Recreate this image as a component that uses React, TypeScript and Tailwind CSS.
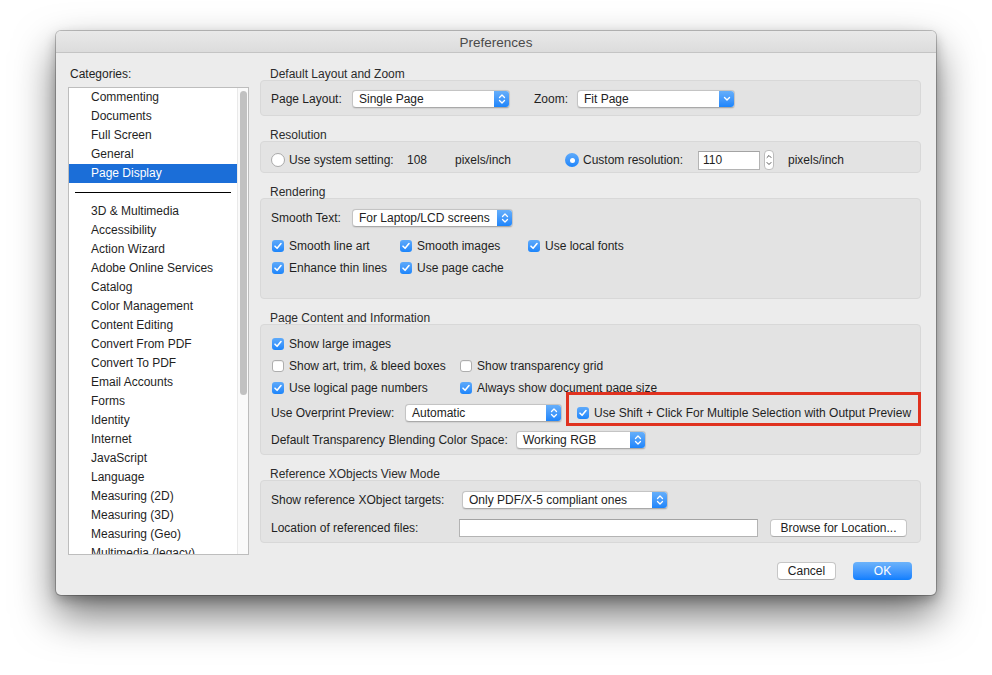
import type { ReactNode } from 'react'

const categoriesTop = ['Commenting', 'Documents', 'Full Screen', 'General', 'Page Display']
const categoriesRest = [
  '3D & Multimedia',
  'Accessibility',
  'Action Wizard',
  'Adobe Online Services',
  'Catalog',
  'Color Management',
  'Content Editing',
  'Convert From PDF',
  'Convert To PDF',
  'Email Accounts',
  'Forms',
  'Identity',
  'Internet',
  'JavaScript',
  'Language',
  'Measuring (2D)',
  'Measuring (3D)',
  'Measuring (Geo)',
  'Multimedia (legacy)',
]

function UpDown() {
  return (
    <svg width="16" height="18" viewBox="0 0 16 18" fill="none" stroke="white" strokeWidth="1.3" strokeLinecap="round" strokeLinejoin="round">
      <path d="M5.5 7.5 L8 5 L10.5 7.5" />
      <path d="M5.5 10.5 L8 13 L10.5 10.5" />
    </svg>
  )
}

function Down() {
  return (
    <svg width="16" height="18" viewBox="0 0 16 18" fill="none" stroke="white" strokeWidth="1.4" strokeLinecap="round" strokeLinejoin="round">
      <path d="M5.5 7.5 L8 10 L10.5 7.5" />
    </svg>
  )
}

function Select({ value, width, pulldown }: { value: string; width: string; pulldown?: boolean }) {
  return (
    <div className={`${width} h-[18px] flex rounded-[4px] bg-white border border-[#c4c4c4] border-b-[#a9a9a9] shadow-[0_0.5px_1px_rgba(0,0,0,0.08)] overflow-hidden`}>
      <span className="flex-1 pl-[6px] leading-[16px] text-[12px] text-[#222]">{value}</span>
      <span className="w-[16px] -my-px -mr-px flex items-center justify-center rounded-r-[4px] bg-gradient-to-b from-[#69b1fa] to-[#1482fb]">
        {pulldown ? <Down /> : <UpDown />}
      </span>
    </div>
  )
}

function Check({ on }: { on?: boolean }) {
  if (!on)
    return <span className="w-[12px] h-[12px] shrink-0 rounded-[3px] bg-white border border-[#aeaeae] shadow-[inset_0_1px_0_rgba(0,0,0,0.05)]" />
  return (
    <span className="w-[12px] h-[12px] shrink-0 rounded-[3px] bg-gradient-to-b from-[#5eaafa] to-[#1a85fb] flex items-center justify-center">
      <svg width="10" height="10" viewBox="0 0 10 10" fill="none" stroke="white" strokeWidth="1.6" strokeLinecap="round" strokeLinejoin="round">
        <path d="M2 5.2 L4.1 7.3 L8 2.6" />
      </svg>
    </span>
  )
}

function Radio({ on }: { on?: boolean }) {
  if (!on) return <span className="w-[14px] h-[14px] shrink-0 rounded-full bg-white border border-[#a9a9a9]" />
  return (
    <span className="w-[14px] h-[14px] shrink-0 rounded-full bg-gradient-to-b from-[#5eaafa] to-[#1a85fb] flex items-center justify-center">
      <span className="w-[5px] h-[5px] rounded-full bg-white" />
    </span>
  )
}

function CheckItem({ label, on, width }: { label: string; on?: boolean; width?: string }) {
  return (
    <div className={`flex items-center gap-[5px] ${width ?? ''}`}>
      <Check on={on} />
      <span>{label}</span>
    </div>
  )
}

function Section({ title, box, children }: { title: string; box: string; children: ReactNode }) {
  return (
    <div>
      <div className="h-[16px] leading-[20px] pl-[10px] text-[#2b2b2b]">{title}</div>
      <div className={`${box} rounded-[4px] bg-[#e3e3e3] border border-[#d8d8d8] pl-[10px]`}>{children}</div>
    </div>
  )
}

export default function App() {
  return (
    <div className="w-[992px] h-[675px] bg-white pt-[31px] pl-[56px] font-['Liberation_Sans',Arial,sans-serif] text-[12px] text-[#1f1f1f]">
      <div className="w-[880px] h-[564px] rounded-[5px] bg-[#ececec] overflow-hidden shadow-[0_20px_42px_rgba(0,0,0,0.55),0_5px_12px_rgba(0,0,0,0.25),0_0_0_1px_rgba(0,0,0,0.22)]">
        {/* title bar */}
        <div className="h-[22px] pt-[4px] bg-gradient-to-b from-[#e9e9e9] to-[#dcdcdc] border-b border-[#c4c4c4] flex items-center justify-center text-[13.5px] text-[#4a4a4a]">
          Preferences
        </div>

        <div className="flex pl-[12px]">
          {/* categories */}
          <div className="w-[181px] pt-[12px]">
            <div className="h-[16px] leading-[18px] pl-[2px]">Categories:</div>
            <div className="mt-[6px] h-[468px] border border-[#bdbdbd] bg-white flex overflow-hidden">
              <div className="flex-1">
                {categoriesTop.map((c) => (
                  <div
                    key={c}
                    className={`h-[19px] leading-[18px] pl-[22px] ${c === 'Page Display' ? 'bg-[#1b6ed8] text-white' : ''}`}
                  >
                    {c}
                  </div>
                ))}
                <div className="h-[19px] flex items-center px-[6px]">
                  <div className="h-px w-full bg-black" />
                </div>
                {categoriesRest.map((c) => (
                  <div key={c} className="h-[19px] leading-[18px] pl-[22px]">
                    {c}
                  </div>
                ))}
              </div>
              <div className="w-[11px] bg-[#fafafa] border-l border-[#e9e9e9] pt-[3px] flex justify-center">
                <div className="w-[7px] h-[304px] rounded-full bg-[#c1c1c1]" />
              </div>
            </div>
          </div>

          {/* settings */}
          <div className="w-[661px] ml-[11px] pt-[11px] flex flex-col gap-[9px]">
            <Section title="Default Layout and Zoom" box="h-[36px] pt-[2px] flex items-center">
              <span className="w-[81px]">Page Layout:</span>
              <Select value="Single Page" width="w-[158px]" />
              <span className="ml-[24px] w-[43px]">Zoom:</span>
              <Select value="Fit Page" width="w-[158px]" pulldown />
            </Section>

            <Section title="Resolution" box="h-[32px] pt-[6px] flex items-center">
              <Radio />
              <span className="ml-[4px] w-[118px]">Use system setting:</span>
              <span className="w-[48px]">108</span>
              <span className="w-[110px]">pixels/inch</span>
              <Radio on />
              <span className="ml-[4px] w-[115px]">Custom resolution:</span>
              <div className="w-[62px] h-[19px] bg-white border border-[#b4b4b4] border-t-[#a3a3a3] pl-[4px] leading-[17px]">110</div>
              <div className="ml-[4px] w-[10px] h-[20px] rounded-[4px] bg-white border border-[#bdbdbd] flex flex-col items-center justify-center">
                <svg width="8" height="18" viewBox="0 0 8 18" fill="none" stroke="#555" strokeWidth="1" strokeLinecap="round" strokeLinejoin="round">
                  <path d="M2 6.5 L4 4.5 L6 6.5" />
                  <path d="M2 11.5 L4 13.5 L6 11.5" />
                </svg>
              </div>
              <span className="ml-[14px]">pixels/inch</span>
            </Section>

            <Section title="Rendering" box="h-[101px] pt-[10px]">
              <div className="h-[18px] flex items-center">
                <span className="w-[81px]">Smooth Text:</span>
                <Select value="For Laptop/LCD screens" width="w-[161px]" />
              </div>
              <div className="mt-[11px] h-[16px] flex items-center pl-px">
                <CheckItem label="Smooth line art" on width="w-[128px]" />
                <CheckItem label="Smooth images" on width="w-[128px]" />
                <CheckItem label="Use local fonts" on />
              </div>
              <div className="mt-[6px] h-[16px] flex items-center pl-px">
                <CheckItem label="Enhance thin lines" on width="w-[128px]" />
                <CheckItem label="Use page cache" on />
              </div>
            </Section>

            <Section title="Page Content and Information" box="h-[131px] pt-[11px] relative">
              <div className="h-[16px] flex items-center pl-px">
                <CheckItem label="Show large images" on />
              </div>
              <div className="mt-[6px] h-[16px] flex items-center pl-px">
                <CheckItem label="Show art, trim, & bleed boxes" width="w-[188px]" />
                <CheckItem label="Show transparency grid" />
              </div>
              <div className="mt-[6px] h-[16px] flex items-center pl-px">
                <CheckItem label="Use logical page numbers" on width="w-[188px]" />
                <CheckItem label="Always show document page size" on />
              </div>
              <div className="mt-[8px] h-[18px] flex items-center">
                <span className="w-[134px]">Use Overprint Preview:</span>
                <Select value="Automatic" width="w-[157px]" />
                <div className="ml-[15px]">
                  <CheckItem label="Use Shift + Click For Multiple Selection with Output Preview" on />
                </div>
              </div>
              <div className="mt-[9px] h-[18px] flex items-center">
                <span className="w-[245px]">Default Transparency Blending Color Space:</span>
                <Select value="Working RGB" width="w-[130px]" />
              </div>
              <div className="absolute left-[305px] top-[67px] w-[355px] h-[34px] border-[3px] border-[#e0321f]" />
            </Section>

            <Section title="Reference XObjects View Mode" box="h-[63px] pt-[10px]">
              <div className="h-[18px] flex items-center">
                <span className="w-[191px]">Show reference XObject targets:</span>
                <Select value="Only PDF/X-5 compliant ones" width="w-[206px]" />
              </div>
              <div className="mt-[10px] h-[18px] flex items-center">
                <span className="w-[188px]">Location of referenced files:</span>
                <div className="w-[299px] h-[18px] bg-white border border-[#b4b4b4] border-t-[#a3a3a3]" />
                <button className="ml-[12px] w-[137px] h-[18px] rounded-[4px] bg-white border border-[#c6c6c6] border-b-[#adadad] leading-[16px] text-[12px] text-[#222]">
                  Browse for Location...
                </button>
              </div>
            </Section>

            <div className="mt-[10px] h-[18px] flex justify-end gap-[17px] pr-[9px]">
              <button className="w-[59px] h-[18px] rounded-[4px] bg-white border border-[#c6c6c6] border-b-[#adadad] leading-[17px] text-[12px] text-[#222]">
                Cancel
              </button>
              <button className="w-[59px] h-[18px] rounded-[4px] bg-gradient-to-b from-[#6cb3fa] to-[#0b7efe] leading-[19px] text-[12px] text-white">
                OK
              </button>
            </div>
          </div>
        </div>
      </div>
    </div>
  )
}
